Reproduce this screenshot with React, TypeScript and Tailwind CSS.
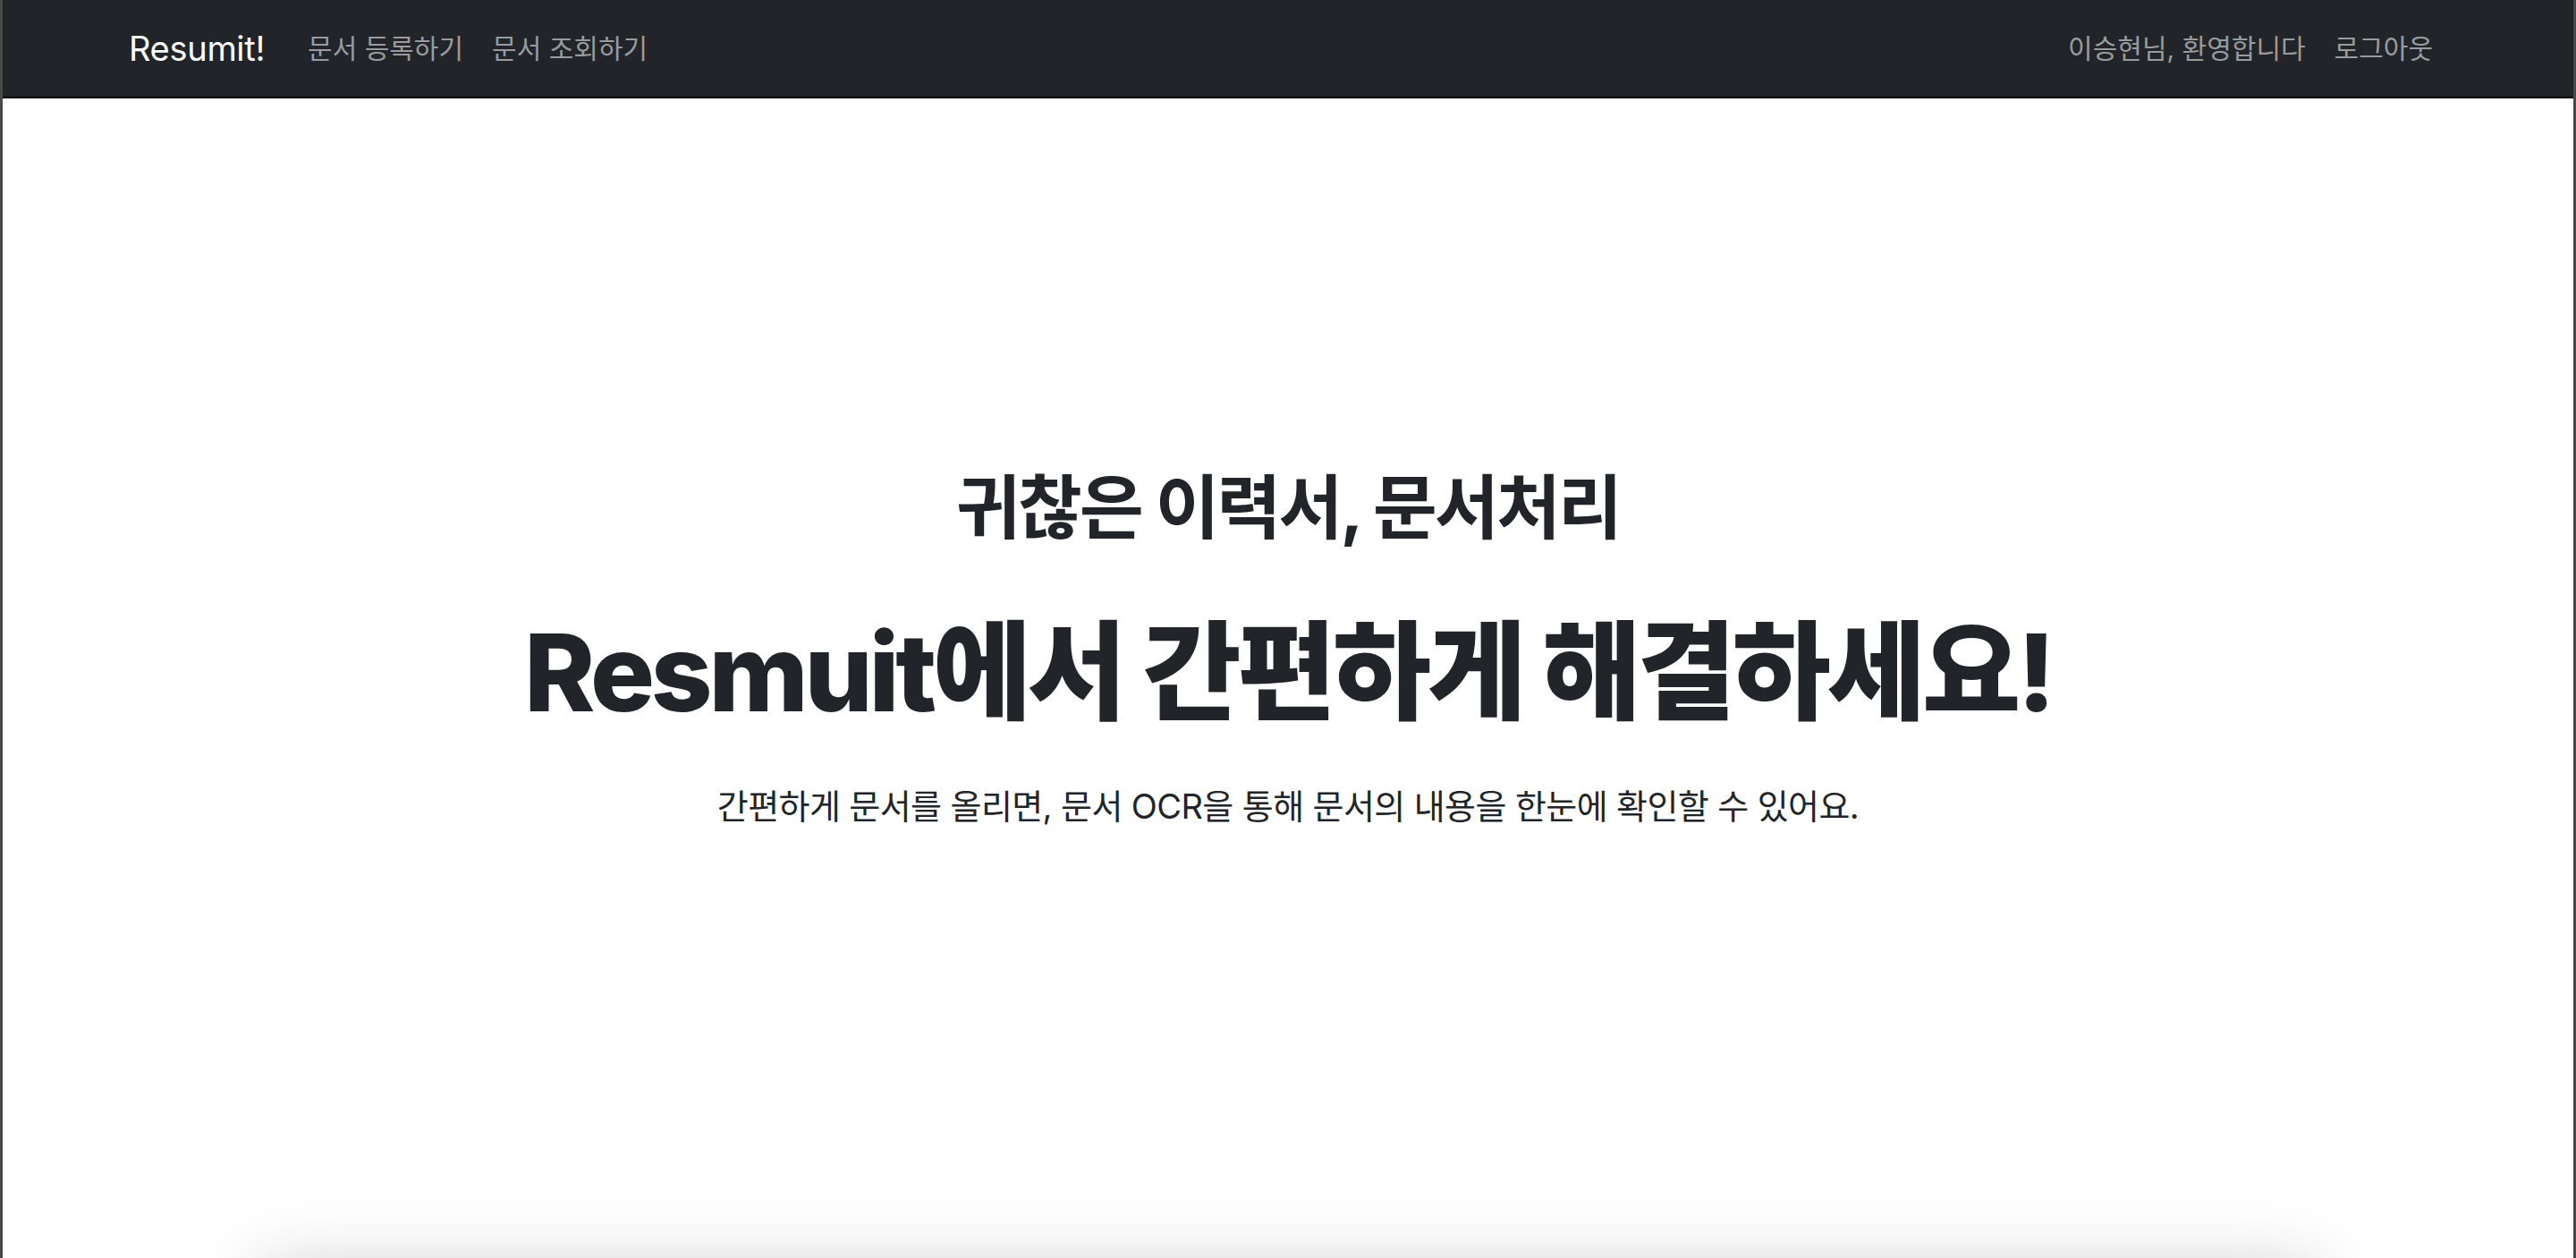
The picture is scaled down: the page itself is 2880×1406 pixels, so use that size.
const font = '[font-family:Inter,"Noto_Sans_CJK_KR",sans-serif]';

const NavLink = ({ children }: { children: React.ReactNode }) => (
  <a href="#" className="px-4 text-[30px] leading-[48px] text-[#9a9b9d] hover:text-white">
    {children}
  </a>
);

export default function App() {
  return (
    <div
      className={`h-screen overflow-hidden border-l-[3px] border-r-[3px] border-[#4a4a4a] bg-white text-[#212529] ${font}`}
    >
      <header className="h-[110px] border-b-2 border-black bg-[#212529]">
        <div className="mx-auto flex h-full w-[2592px] items-center justify-between">
          <nav className="flex items-center">
            <a href="#" className="mr-8 text-[38px] leading-[54px] tracking-[-0.3px] text-white">
              Resumit!
            </a>
            <NavLink>문서 등록하기</NavLink>
            <NavLink>문서 조회하기</NavLink>
          </nav>
          <nav className="flex items-center">
            <NavLink>이승현님, 환영합니다</NavLink>
            <NavLink>로그아웃</NavLink>
          </nav>
        </div>
      </header>

      <main className="flex flex-col items-center pt-[413px] text-center">
        <h1 className="text-[78px] font-bold leading-[90px] tracking-[-2.8px]">귀찮은 이력서, 문서처리</h1>
        <h2 className="mt-[67px] text-[120px] font-extrabold leading-[144px] tracking-[-4.2px]">
          Resmuit에서 간편하게 해결하세요!
        </h2>
        <p className="mt-[49px] text-[38px] leading-[57px] tracking-[-0.6px]">
          간편하게 문서를 올리면, 문서 OCR을 통해 문서의 내용을 한눈에 확인할 수 있어요.
        </p>
        <section className="mt-[484px] h-[600px] w-[2300px] rounded-lg bg-white shadow-[0_0_80px_rgba(0,0,0,0.18)]" />
      </main>
    </div>
  );
}
